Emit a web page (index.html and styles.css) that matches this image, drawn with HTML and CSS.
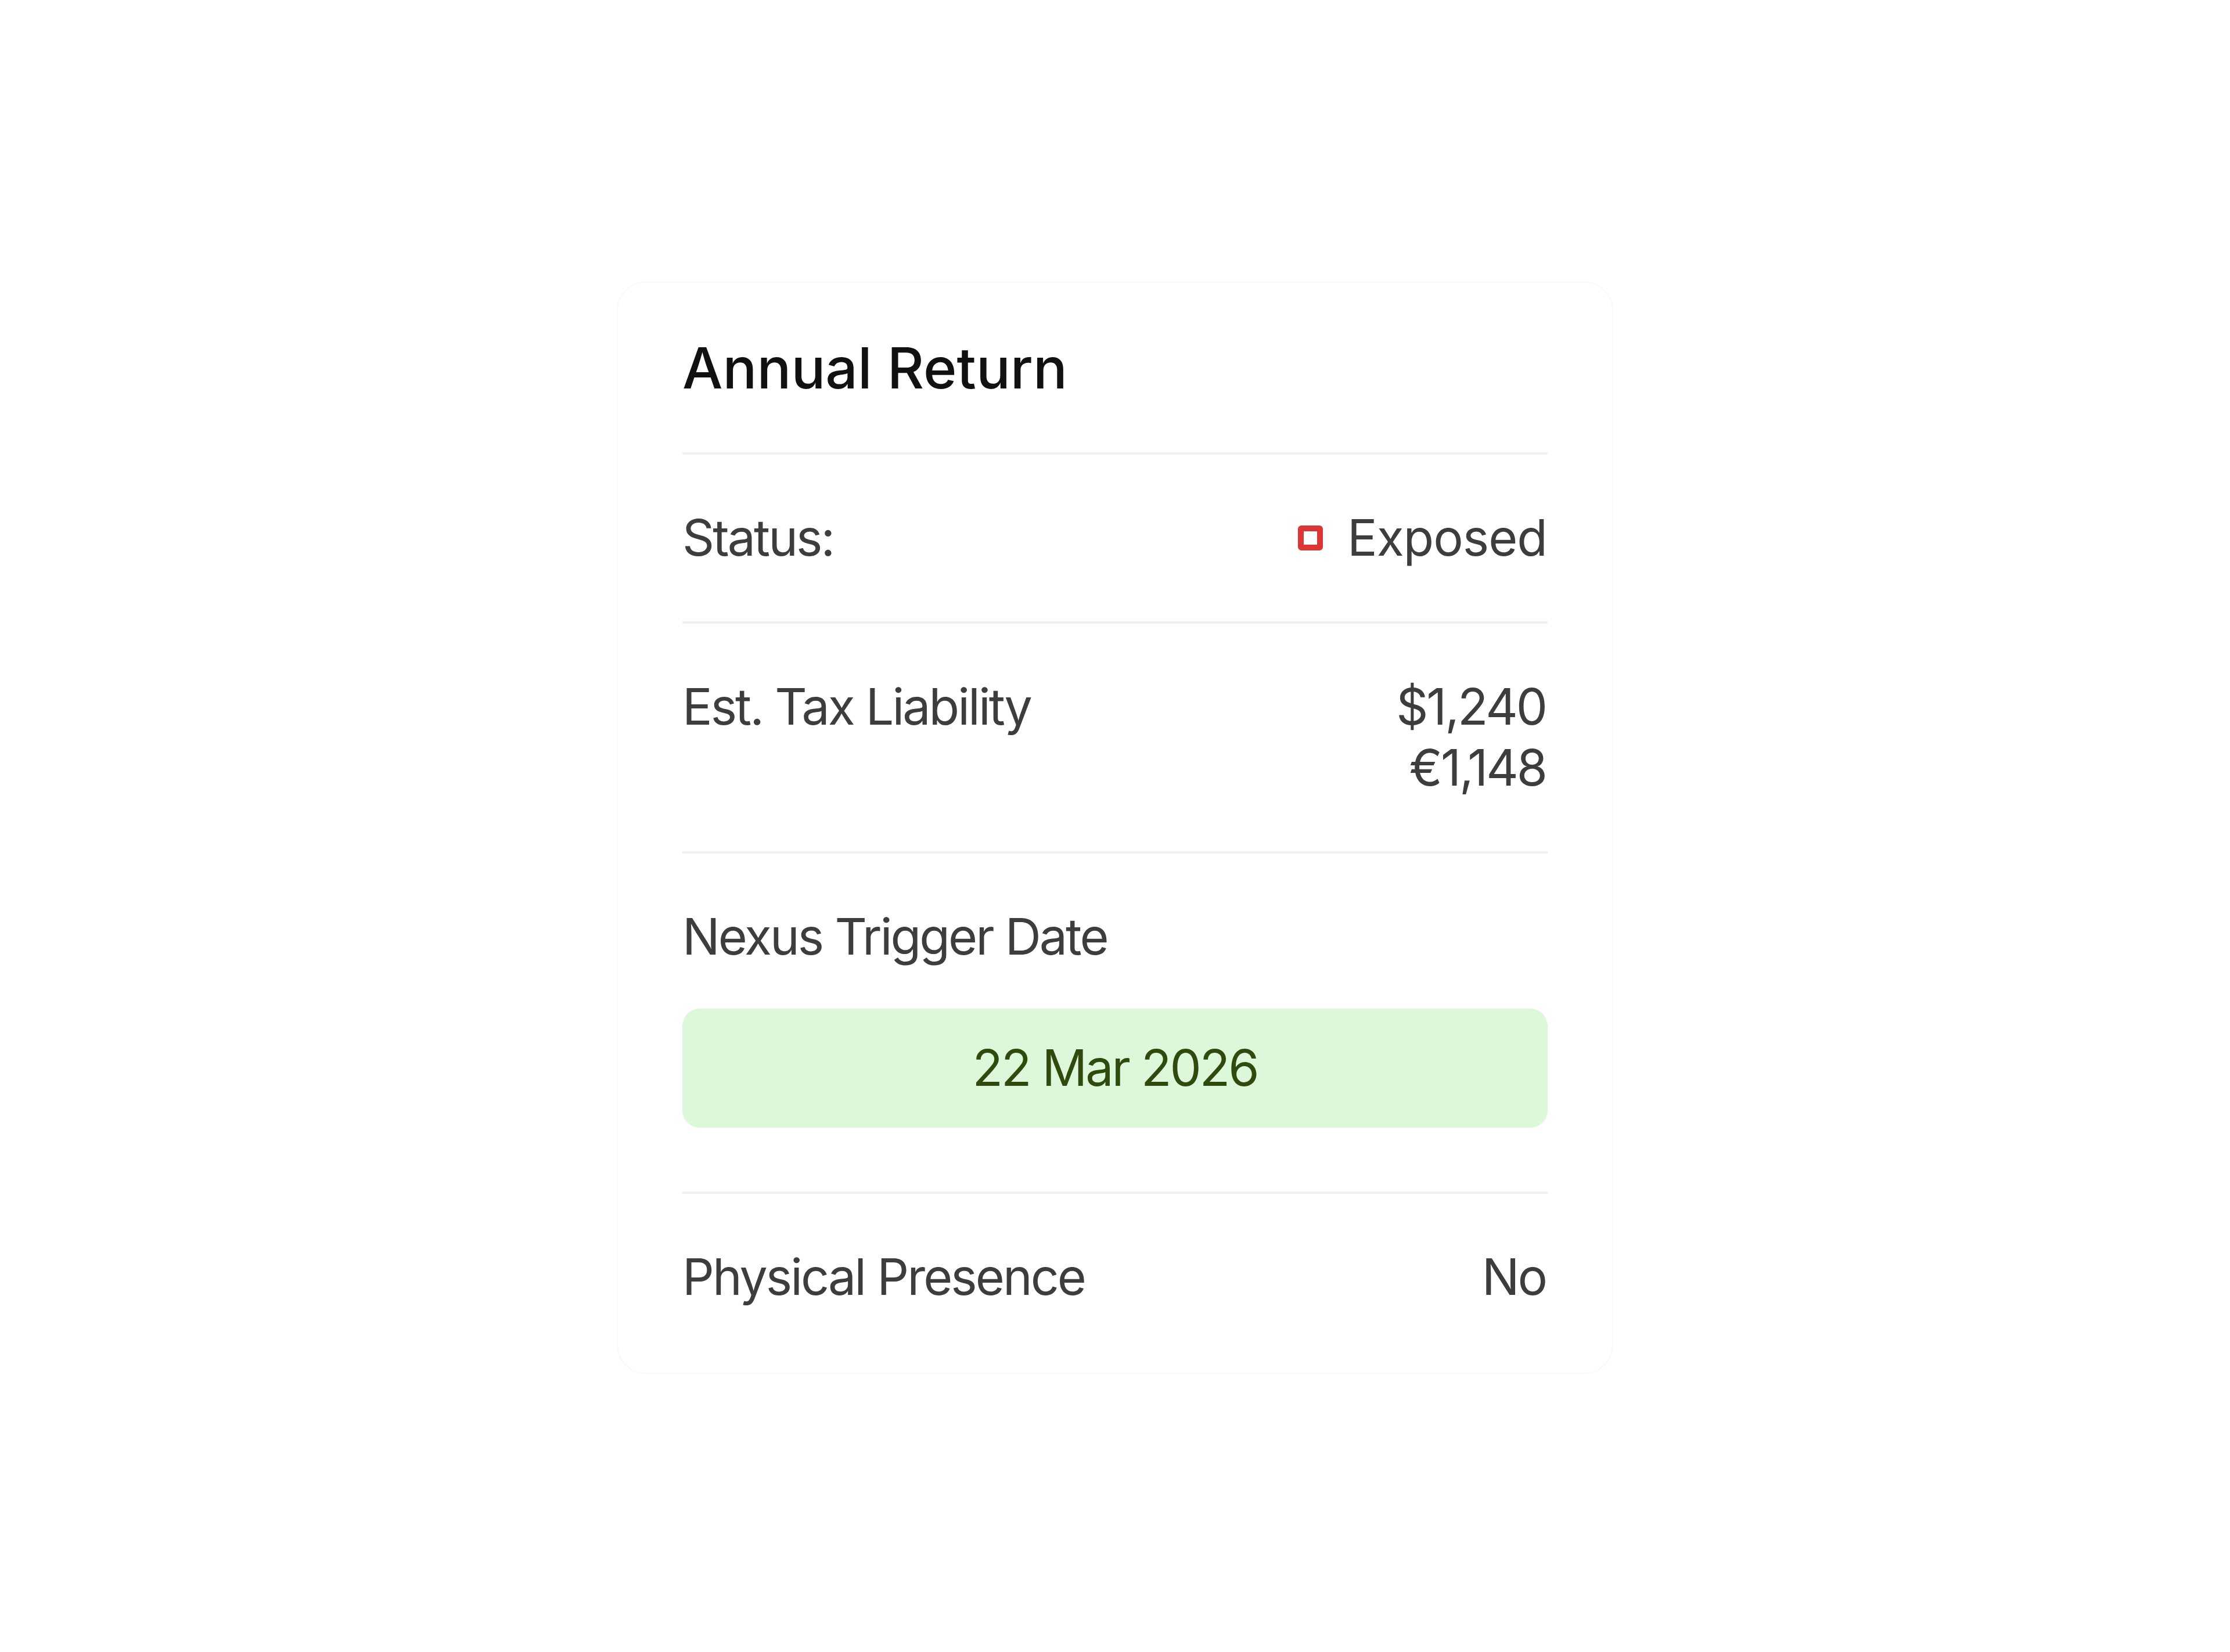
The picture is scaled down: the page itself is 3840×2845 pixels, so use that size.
FILE: index.html
```html
<!DOCTYPE html>
<html lang="en">
<head>
  <meta charset="UTF-8">
  <title>Annual Return</title>
  <link rel="stylesheet" href="styles.css">
</head>
<body>

  <div class="card">
    <h2 class="card-title">Annual Return</h2>

    <div class="row">
      <span class="label">Status:</span>
      <span class="value status">
        <span class="status-dot"></span>
        Exposed
      </span>
    </div>

    <div class="row">
      <span class="label">Est. Tax Liability</span>
      <span class="value amounts">
        <span>$1,240</span>
        <span>€1,148</span>
      </span>
    </div>

    <div class="row row-block">
      <span class="label">Nexus Trigger Date</span>
      <div class="date-pill">22 Mar 2026</div>
    </div>

    <div class="row row-last">
      <span class="label">Physical Presence</span>
      <span class="value">No</span>
    </div>
  </div>

</body>
</html>
```

FILE: styles.css
```css
body {
  margin: 0;
  background: #fff;
  font-family: 'Inter', 'Noto Sans', sans-serif;
}
.card {
  width: 1716px;
  box-sizing: border-box;
  margin: 485px auto 0 auto;
  padding: 0 111px;
  border: 2px solid #f9f9f9;
  border-radius: 50px;
  background: #fff;
}
.card-title {
  margin: 0;
  padding: 87px 0 85px 0;
  font-size: 98px;
  line-height: 120px;
  font-weight: 500;
  color: #111;
  letter-spacing: 0;
  border-bottom: 4px solid #f0f0f0;
}
.row {
  display: flex;
  justify-content: space-between;
  align-items: flex-start;
  padding: 91px 0;
  border-bottom: 4px solid #f0f0f0;
  font-size: 86px;
  line-height: 105px;
  color: #3d3d3d;
  letter-spacing: -3px;
}
.row-block {
  display: block;
  padding-bottom: 110px;
}
.row-last {
  border-bottom: none;
  padding-bottom: 112px;
}
.label {
  display: block;
}
.value {
  text-align: right;
  margin-right: 3px;
}
.status {
  display: flex;
  align-items: center;
  gap: 42px;
  letter-spacing: -1px;
  margin-right: 1px;
}
.status-dot {
  width: 43px;
  height: 43px;
  box-sizing: border-box;
  border: 10px solid #dc3535;
  border-radius: 6px;
}
.amounts {
  display: flex;
  flex-direction: column;
  align-items: flex-end;
}
.date-pill {
  margin-top: 71px;
  padding: 50px 0;
  background: #dcf7da;
  border-radius: 30px;
  text-align: center;
  color: #2f4a0c;
}
```
